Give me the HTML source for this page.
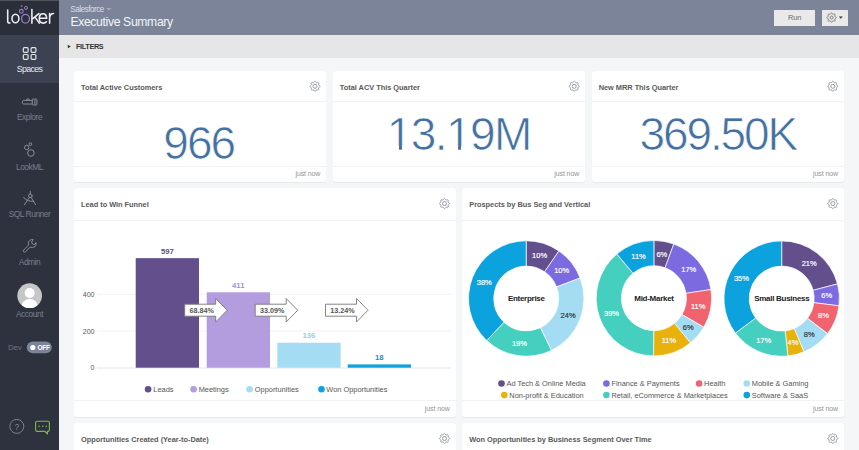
<!DOCTYPE html>
<html><head><meta charset="utf-8">
<style>
*{margin:0;padding:0;box-sizing:border-box}
html,body{width:859px;height:450px;overflow:hidden;background:#f5f6f8;font-family:"Liberation Sans",sans-serif}
.abs{position:absolute;white-space:nowrap}
#side{position:absolute;left:0;top:0;width:59px;height:450px;background:#2d323e}
#logo{position:absolute;left:0;top:0;width:59px;height:35px;background:#2a2f3a}
#sel{position:absolute;left:0;top:35px;width:59px;height:48px;background:#3c4252}
.nav{position:absolute;left:0;width:59px;text-align:center;font-size:8.4px;letter-spacing:-0.45px;color:#7a7f8a;white-space:nowrap}
#hdr{position:absolute;left:59px;top:0;width:800px;height:34.6px;background:#7b8499}
#flt{position:absolute;left:59px;top:34.6px;width:800px;height:23px;background:#e6e6e6}
.btn{position:absolute;top:10px;height:15.7px;background:#e9e9e9;border-radius:0.5px}
.card{position:absolute;background:#fff;border-radius:3px;box-shadow:0 0.5px 1px rgba(0,0,0,0.06)}
.ct{position:absolute;left:7px;top:11.6px;font-size:7.4px;font-weight:bold;color:#5a5a5a;white-space:nowrap;letter-spacing:-0.02px}
.hd{position:absolute;left:0;right:0;height:0.8px;background:#f2f2f2}
.foot{position:absolute;left:0;right:0;height:0.8px;background:#f2f2f2}
.jn{position:absolute;right:6px;font-size:7px;color:#939393;white-space:nowrap;letter-spacing:-0.1px}
.big{position:absolute;font-size:46px;color:#4471a2;white-space:nowrap;line-height:1;-webkit-text-stroke:0.7px #fff}
svg text{font-family:"Liberation Sans",sans-serif}
.dl{font-size:7.5px;text-anchor:middle;stroke-width:0.18px}
.dc{font-size:8px;font-weight:bold;text-anchor:middle;fill:#222;letter-spacing:-0.28px}
.ax{font-size:7px;text-anchor:end;fill:#555}
.bl{font-size:7.7px;font-weight:bold;text-anchor:middle}
.ar{font-size:7.2px;font-weight:bold;text-anchor:middle;fill:#555}
.lg{font-size:7.4px;fill:#555}
</style></head><body>
<div id="side">
  <div id="logo"></div>
  <div id="sel"></div>
  <div class="abs" style="left:0;top:0;width:59px;height:1px;background:#50545d"></div>
  <div class="nav" style="top:64px;color:#e9eaee;font-size:8.8px;letter-spacing:-0.65px">Spaces</div>
  <div class="nav" style="top:112px">Explore</div>
  <div class="nav" style="top:161.6px">LookML</div>
  <div class="nav" style="top:208.7px">SQL Runner</div>
  <div class="nav" style="top:257.3px">Admin</div>
  <div class="nav" style="top:308.5px">Account</div>
  <div class="abs" style="left:8px;top:342.6px;font-size:8px;color:#6d737f;letter-spacing:-0.3px">Dev</div>
</div>
<div id="hdr">
  <div class="abs" style="left:11.2px;top:5.1px;font-size:8.2px;color:#dcdfe6;letter-spacing:-0.5px">Salesforce</div>
  <div class="abs" style="left:11.4px;top:14.5px;font-size:12.2px;color:#f4f5f7;letter-spacing:-0.35px">Executive Summary</div>
  <div class="btn" style="left:715px;width:41px"></div>
  <div class="abs" style="left:729px;top:13.3px;font-size:7.4px;color:#6a6a6a;letter-spacing:-0.1px">Run</div>
  <div class="btn" style="left:762.7px;width:26.3px"></div>
</div>
<div id="flt">
  <div class="abs" style="left:17px;top:7.5px;font-size:7.2px;font-weight:bold;color:#333;letter-spacing:-0.3px">FILTERS</div>
</div>
<div class="card" style="left:74px;top:71px;width:252.33px;height:111.3px"><div class="ct">Total Active Customers</div><div class="hd" style="top:30px"></div><div class="foot" style="top:94.5px"></div><div class="jn" style="top:99.1px">just now</div></div>
<div class="card" style="left:332.83px;top:71px;width:252.34px;height:111.3px"><div class="ct">Total ACV This Quarter</div><div class="hd" style="top:30px"></div><div class="foot" style="top:94.5px"></div><div class="jn" style="top:99.1px">just now</div></div>
<div class="card" style="left:591.67px;top:71px;width:252.33px;height:111.3px"><div class="ct">New MRR This Quarter</div><div class="hd" style="top:30px"></div><div class="foot" style="top:94.5px"></div><div class="jn" style="top:99.1px">just now</div></div>
<div class="card" style="left:74px;top:188px;width:381.75px;height:228.8px"><div class="ct">Lead to Win Funnel</div><div class="hd" style="top:31.6px"></div><div class="foot" style="top:212.0px"></div><div class="jn" style="top:216.60000000000002px">just now</div></div>
<div class="card" style="left:462.25px;top:188px;width:381.75px;height:228.8px"><div class="ct">Prospects by Bus Seg and Vertical</div><div class="hd" style="top:31.6px"></div><div class="foot" style="top:212.0px"></div><div class="jn" style="top:216.60000000000002px">just now</div></div>
<div class="card" style="left:74px;top:423px;width:381.75px;height:60px"><div class="ct">Opportunities Created (Year-to-Date)</div><div class="hd" style="top:31.6px"></div></div>
<div class="card" style="left:462.25px;top:423px;width:381.75px;height:60px"><div class="ct">Won Opportunities by Business Segment Over Time</div><div class="hd" style="top:31.6px"></div></div>
<div class="big" style="left:163.3px;top:120px;letter-spacing:-1.95px">966</div>
<div class="big" style="left:386.7px;top:111px;letter-spacing:-1.54px">13.19M</div>
<div class="abs" style="left:388px;top:146.4px;width:10.6px;height:5px;background:#fff"></div>
<div class="abs" style="left:401.9px;top:146.4px;width:9px;height:5px;background:#fff"></div>
<div class="abs" style="left:447px;top:146.4px;width:10.6px;height:5px;background:#fff"></div>
<div class="abs" style="left:460.9px;top:146.4px;width:9px;height:5px;background:#fff"></div>
<div class="big" style="left:639.5px;top:111px;letter-spacing:-2.12px">369.50K</div>
<svg class="abs" style="left:0;top:0" width="859" height="450" viewBox="0 0 859 450">
<!-- logo -->
<g fill="none" stroke="#eeeef2" stroke-width="1.55" stroke-linecap="round">
<path d="M7.7,10V21.2Q7.7,23 9.9,23"/>
<ellipse cx="15.45" cy="18.5" rx="3.45" ry="4.3"/>
<path d="M31.9,9.6V23.3M32.2,19.2L38.9,13.6M34.8,16.9L39.3,23.1"/>
<path d="M39.5,18.3H46.6Q46.6,13.8 43,13.8Q39.3,13.8 39.3,18.5Q39.3,23.1 43.2,23.1Q45.3,23.1 46.4,21.7"/>
<path d="M49.6,13.6V23.3M49.6,17.6Q50.2,13.7 53.5,13.6"/>
</g>
<g fill="none" stroke="#9a7cc9" stroke-width="1.3">
<ellipse cx="25.5" cy="18.8" rx="3.95" ry="4.35"/>
<circle cx="21.3" cy="11.3" r="1.9" stroke-width="1.1"/>
<circle cx="26" cy="7.9" r="1.5" stroke-width="1"/>
<circle cx="21.6" cy="6" r="1" fill="#7e68a8" stroke="none"/>
</g>
<!-- spaces icon -->
<g fill="none" stroke="#e4e6ea" stroke-width="1.2">
<rect x="23.3" y="47.6" width="4.8" height="4.8" rx="1.1"/><rect x="31.1" y="47.6" width="4.8" height="4.8" rx="1.1"/>
<rect x="23.3" y="54.5" width="4.8" height="4.8" rx="1.1"/><rect x="31.1" y="54.5" width="4.8" height="4.8" rx="1.1"/>
</g>
<!-- explore icon -->
<g fill="none" stroke="#8c919b" stroke-width="0.95">
<path d="M32.3,100.4H23.6Q22.4,100.4 22.4,102.2Q22.4,104 23.6,104H32.3"/>
<path d="M26.1,100.4Q26.4,98.9 27.9,98.9Q29.4,98.9 29.7,100.4"/>
<rect x="32.3" y="99.1" width="4.6" height="5.9" rx="0.6"/>
<path d="M34.9,99.5V104.6"/>
</g>
<!-- lookml icon -->
<g fill="none" stroke="#8c919b" stroke-width="0.95">
<circle cx="30.4" cy="144.1" r="1.4"/>
<circle cx="26.7" cy="147.4" r="2.2"/>
<circle cx="30.9" cy="153" r="3.3"/>
</g>
<!-- sql icon -->
<g fill="none" stroke="#8c919b" stroke-width="0.95" stroke-linecap="round">
<path d="M30.3,191.3V194"/>
<circle cx="30.3" cy="195.8" r="1.8"/>
<path d="M29.4,197.5L24.4,204.7M31.2,197.5L35.6,204.7"/>
<path d="M23.6,197.3Q26.8,201.8 33.3,201.3"/>
</g>
<!-- admin icon -->
<g fill="none" stroke="#8c919b" stroke-width="0.95" stroke-linejoin="round" transform="translate(20,236)">
<path d="M10.2,11.1L5.6,15.7Q4.6,16.7 3.7,15.8Q2.8,14.9 3.8,13.9L8.4,9.3Q7.6,6.2 9.8,4.3Q11.4,3.1 13.2,3.6L11.6,5.9L12.4,8L14.6,8.6L16,6.6Q16.6,8.9 15,10.6Q12.9,12.3 10.2,11.1Z"/>
</g>
<!-- avatar -->
<clipPath id="av"><circle cx="29.65" cy="295.65" r="12.35"/></clipPath>
<circle cx="29.65" cy="295.65" r="12.35" fill="#c6c6c6"/>
<g clip-path="url(#av)" fill="#fff">
<circle cx="29.7" cy="293" r="5"/>
<ellipse cx="29.7" cy="308.5" rx="8.6" ry="9.8"/>
</g>
<!-- toggle -->
<rect x="26.8" y="341.5" width="25" height="11.8" rx="5.9" fill="#7b8499"/>
<circle cx="32.8" cy="347.5" r="2.6" fill="#fff"/>
<text x="37.5" y="350.1" font-size="6.5" font-weight="bold" fill="#fff" letter-spacing="-0.25">OFF</text>
<!-- help -->
<circle cx="16.8" cy="426.4" r="7" fill="none" stroke="#80858f" stroke-width="0.95"/>
<text x="16.8" y="429.5" font-size="8.5" fill="#80858f" text-anchor="middle">?</text>
<!-- chat -->
<path d="M37.2,421.2H47.8Q49.4,421.2 49.4,422.8V429.8Q49.4,431.4 47.8,431.4H47.4V434L45,431.4H37.2Q35.6,431.4 35.6,429.8V422.8Q35.6,421.2 37.2,421.2Z" fill="none" stroke="#7ab648" stroke-width="1.15" stroke-linejoin="round"/>
<g fill="#7ab648"><circle cx="39.1" cy="426.3" r="0.8"/><circle cx="42.8" cy="426.3" r="0.8"/><circle cx="46.3" cy="426.3" r="0.8"/></g>
<!-- salesforce chevron -->
<path d="M107.4,8.1L108.9,9.6L110.4,8.1" fill="none" stroke="#dcdfe6" stroke-width="1"/>
<path d="M315.00,81.27L315.32,81.36L315.62,81.60L315.87,81.94L316.08,82.28L316.27,82.56L316.48,82.72L316.75,82.76L317.08,82.70L317.47,82.60L317.89,82.54L318.27,82.58L318.56,82.74L318.72,83.03L318.76,83.41L318.70,83.83L318.60,84.22L318.54,84.55L318.58,84.82L318.74,85.03L319.02,85.22L319.36,85.43L319.70,85.68L319.94,85.98L320.03,86.30L319.94,86.62L319.70,86.92L319.36,87.17L319.02,87.38L318.74,87.57L318.58,87.78L318.54,88.05L318.60,88.38L318.70,88.77L318.76,89.19L318.72,89.57L318.56,89.86L318.27,90.02L317.89,90.06L317.47,90.00L317.08,89.90L316.75,89.84L316.48,89.88L316.27,90.04L316.08,90.32L315.87,90.66L315.62,91.00L315.32,91.24L315.00,91.33L314.68,91.24L314.38,91.00L314.13,90.66L313.92,90.32L313.73,90.04L313.52,89.88L313.25,89.84L312.92,89.90L312.53,90.00L312.11,90.06L311.73,90.02L311.44,89.86L311.28,89.57L311.24,89.19L311.30,88.77L311.40,88.38L311.46,88.05L311.42,87.78L311.26,87.57L310.98,87.38L310.64,87.17L310.30,86.92L310.06,86.62L309.97,86.30L310.06,85.98L310.30,85.68L310.64,85.43L310.98,85.22L311.26,85.03L311.42,84.82L311.46,84.55L311.40,84.22L311.30,83.83L311.24,83.41L311.28,83.03L311.44,82.74L311.73,82.58L312.11,82.54L312.53,82.60L312.92,82.70L313.25,82.76L313.52,82.72L313.73,82.56L313.92,82.28L314.13,81.94L314.38,81.60L314.68,81.36Z" fill="none" stroke="#949aa3" stroke-width="1.0" stroke-linejoin="round"/><circle cx="315" cy="86.3" r="2.0" fill="none" stroke="#949aa3" stroke-width="1.0"/>
<path d="M574.20,81.27L574.52,81.36L574.82,81.60L575.07,81.94L575.28,82.28L575.47,82.56L575.68,82.72L575.95,82.76L576.28,82.70L576.67,82.60L577.09,82.54L577.47,82.58L577.76,82.74L577.92,83.03L577.96,83.41L577.90,83.83L577.80,84.22L577.74,84.55L577.78,84.82L577.94,85.03L578.22,85.22L578.56,85.43L578.90,85.68L579.14,85.98L579.23,86.30L579.14,86.62L578.90,86.92L578.56,87.17L578.22,87.38L577.94,87.57L577.78,87.78L577.74,88.05L577.80,88.38L577.90,88.77L577.96,89.19L577.92,89.57L577.76,89.86L577.47,90.02L577.09,90.06L576.67,90.00L576.28,89.90L575.95,89.84L575.68,89.88L575.47,90.04L575.28,90.32L575.07,90.66L574.82,91.00L574.52,91.24L574.20,91.33L573.88,91.24L573.58,91.00L573.33,90.66L573.12,90.32L572.93,90.04L572.72,89.88L572.45,89.84L572.12,89.90L571.73,90.00L571.31,90.06L570.93,90.02L570.64,89.86L570.48,89.57L570.44,89.19L570.50,88.77L570.60,88.38L570.66,88.05L570.62,87.78L570.46,87.57L570.18,87.38L569.84,87.17L569.50,86.92L569.26,86.62L569.17,86.30L569.26,85.98L569.50,85.68L569.84,85.43L570.18,85.22L570.46,85.03L570.62,84.82L570.66,84.55L570.60,84.22L570.50,83.83L570.44,83.41L570.48,83.03L570.64,82.74L570.93,82.58L571.31,82.54L571.73,82.60L572.12,82.70L572.45,82.76L572.72,82.72L572.93,82.56L573.12,82.28L573.33,81.94L573.58,81.60L573.88,81.36Z" fill="none" stroke="#949aa3" stroke-width="1.0" stroke-linejoin="round"/><circle cx="574.2" cy="86.3" r="2.0" fill="none" stroke="#949aa3" stroke-width="1.0"/>
<path d="M832.80,81.27L833.12,81.36L833.42,81.60L833.67,81.94L833.88,82.28L834.07,82.56L834.28,82.72L834.55,82.76L834.88,82.70L835.27,82.60L835.69,82.54L836.07,82.58L836.36,82.74L836.52,83.03L836.56,83.41L836.50,83.83L836.40,84.22L836.34,84.55L836.38,84.82L836.54,85.03L836.82,85.22L837.16,85.43L837.50,85.68L837.74,85.98L837.83,86.30L837.74,86.62L837.50,86.92L837.16,87.17L836.82,87.38L836.54,87.57L836.38,87.78L836.34,88.05L836.40,88.38L836.50,88.77L836.56,89.19L836.52,89.57L836.36,89.86L836.07,90.02L835.69,90.06L835.27,90.00L834.88,89.90L834.55,89.84L834.28,89.88L834.07,90.04L833.88,90.32L833.67,90.66L833.42,91.00L833.12,91.24L832.80,91.33L832.48,91.24L832.18,91.00L831.93,90.66L831.72,90.32L831.53,90.04L831.32,89.88L831.05,89.84L830.72,89.90L830.33,90.00L829.91,90.06L829.53,90.02L829.24,89.86L829.08,89.57L829.04,89.19L829.10,88.77L829.20,88.38L829.26,88.05L829.22,87.78L829.06,87.57L828.78,87.38L828.44,87.17L828.10,86.92L827.86,86.62L827.77,86.30L827.86,85.98L828.10,85.68L828.44,85.43L828.78,85.22L829.06,85.03L829.22,84.82L829.26,84.55L829.20,84.22L829.10,83.83L829.04,83.41L829.08,83.03L829.24,82.74L829.53,82.58L829.91,82.54L830.33,82.60L830.72,82.70L831.05,82.76L831.32,82.72L831.53,82.56L831.72,82.28L831.93,81.94L832.18,81.60L832.48,81.36Z" fill="none" stroke="#949aa3" stroke-width="1.0" stroke-linejoin="round"/><circle cx="832.8" cy="86.3" r="2.0" fill="none" stroke="#949aa3" stroke-width="1.0"/>
<path d="M444.50,198.57L444.82,198.66L445.12,198.90L445.37,199.24L445.58,199.58L445.77,199.86L445.98,200.02L446.25,200.06L446.58,200.00L446.97,199.90L447.39,199.84L447.77,199.88L448.06,200.04L448.22,200.33L448.26,200.71L448.20,201.13L448.10,201.52L448.04,201.85L448.08,202.12L448.24,202.33L448.52,202.52L448.86,202.73L449.20,202.98L449.44,203.28L449.53,203.60L449.44,203.92L449.20,204.22L448.86,204.47L448.52,204.68L448.24,204.87L448.08,205.08L448.04,205.35L448.10,205.68L448.20,206.07L448.26,206.49L448.22,206.87L448.06,207.16L447.77,207.32L447.39,207.36L446.97,207.30L446.58,207.20L446.25,207.14L445.98,207.18L445.77,207.34L445.58,207.62L445.37,207.96L445.12,208.30L444.82,208.54L444.50,208.63L444.18,208.54L443.88,208.30L443.63,207.96L443.42,207.62L443.23,207.34L443.02,207.18L442.75,207.14L442.42,207.20L442.03,207.30L441.61,207.36L441.23,207.32L440.94,207.16L440.78,206.87L440.74,206.49L440.80,206.07L440.90,205.68L440.96,205.35L440.92,205.08L440.76,204.87L440.48,204.68L440.14,204.47L439.80,204.22L439.56,203.92L439.47,203.60L439.56,203.28L439.80,202.98L440.14,202.73L440.48,202.52L440.76,202.33L440.92,202.12L440.96,201.85L440.90,201.52L440.80,201.13L440.74,200.71L440.78,200.33L440.94,200.04L441.23,199.88L441.61,199.84L442.03,199.90L442.42,200.00L442.75,200.06L443.02,200.02L443.23,199.86L443.42,199.58L443.63,199.24L443.88,198.90L444.18,198.66Z" fill="none" stroke="#949aa3" stroke-width="1.0" stroke-linejoin="round"/><circle cx="444.5" cy="203.6" r="2.0" fill="none" stroke="#949aa3" stroke-width="1.0"/>
<path d="M832.80,198.57L833.12,198.66L833.42,198.90L833.67,199.24L833.88,199.58L834.07,199.86L834.28,200.02L834.55,200.06L834.88,200.00L835.27,199.90L835.69,199.84L836.07,199.88L836.36,200.04L836.52,200.33L836.56,200.71L836.50,201.13L836.40,201.52L836.34,201.85L836.38,202.12L836.54,202.33L836.82,202.52L837.16,202.73L837.50,202.98L837.74,203.28L837.83,203.60L837.74,203.92L837.50,204.22L837.16,204.47L836.82,204.68L836.54,204.87L836.38,205.08L836.34,205.35L836.40,205.68L836.50,206.07L836.56,206.49L836.52,206.87L836.36,207.16L836.07,207.32L835.69,207.36L835.27,207.30L834.88,207.20L834.55,207.14L834.28,207.18L834.07,207.34L833.88,207.62L833.67,207.96L833.42,208.30L833.12,208.54L832.80,208.63L832.48,208.54L832.18,208.30L831.93,207.96L831.72,207.62L831.53,207.34L831.32,207.18L831.05,207.14L830.72,207.20L830.33,207.30L829.91,207.36L829.53,207.32L829.24,207.16L829.08,206.87L829.04,206.49L829.10,206.07L829.20,205.68L829.26,205.35L829.22,205.08L829.06,204.87L828.78,204.68L828.44,204.47L828.10,204.22L827.86,203.92L827.77,203.60L827.86,203.28L828.10,202.98L828.44,202.73L828.78,202.52L829.06,202.33L829.22,202.12L829.26,201.85L829.20,201.52L829.10,201.13L829.04,200.71L829.08,200.33L829.24,200.04L829.53,199.88L829.91,199.84L830.33,199.90L830.72,200.00L831.05,200.06L831.32,200.02L831.53,199.86L831.72,199.58L831.93,199.24L832.18,198.90L832.48,198.66Z" fill="none" stroke="#949aa3" stroke-width="1.0" stroke-linejoin="round"/><circle cx="832.8" cy="203.6" r="2.0" fill="none" stroke="#949aa3" stroke-width="1.0"/>
<path d="M444.50,433.47L444.82,433.56L445.12,433.80L445.37,434.14L445.58,434.48L445.77,434.76L445.98,434.92L446.25,434.96L446.58,434.90L446.97,434.80L447.39,434.74L447.77,434.78L448.06,434.94L448.22,435.23L448.26,435.61L448.20,436.03L448.10,436.42L448.04,436.75L448.08,437.02L448.24,437.23L448.52,437.42L448.86,437.63L449.20,437.88L449.44,438.18L449.53,438.50L449.44,438.82L449.20,439.12L448.86,439.37L448.52,439.58L448.24,439.77L448.08,439.98L448.04,440.25L448.10,440.58L448.20,440.97L448.26,441.39L448.22,441.77L448.06,442.06L447.77,442.22L447.39,442.26L446.97,442.20L446.58,442.10L446.25,442.04L445.98,442.08L445.77,442.24L445.58,442.52L445.37,442.86L445.12,443.20L444.82,443.44L444.50,443.53L444.18,443.44L443.88,443.20L443.63,442.86L443.42,442.52L443.23,442.24L443.02,442.08L442.75,442.04L442.42,442.10L442.03,442.20L441.61,442.26L441.23,442.22L440.94,442.06L440.78,441.77L440.74,441.39L440.80,440.97L440.90,440.58L440.96,440.25L440.92,439.98L440.76,439.77L440.48,439.58L440.14,439.37L439.80,439.12L439.56,438.82L439.47,438.50L439.56,438.18L439.80,437.88L440.14,437.63L440.48,437.42L440.76,437.23L440.92,437.02L440.96,436.75L440.90,436.42L440.80,436.03L440.74,435.61L440.78,435.23L440.94,434.94L441.23,434.78L441.61,434.74L442.03,434.80L442.42,434.90L442.75,434.96L443.02,434.92L443.23,434.76L443.42,434.48L443.63,434.14L443.88,433.80L444.18,433.56Z" fill="none" stroke="#949aa3" stroke-width="1.0" stroke-linejoin="round"/><circle cx="444.5" cy="438.5" r="2.0" fill="none" stroke="#949aa3" stroke-width="1.0"/>
<path d="M832.80,433.47L833.12,433.56L833.42,433.80L833.67,434.14L833.88,434.48L834.07,434.76L834.28,434.92L834.55,434.96L834.88,434.90L835.27,434.80L835.69,434.74L836.07,434.78L836.36,434.94L836.52,435.23L836.56,435.61L836.50,436.03L836.40,436.42L836.34,436.75L836.38,437.02L836.54,437.23L836.82,437.42L837.16,437.63L837.50,437.88L837.74,438.18L837.83,438.50L837.74,438.82L837.50,439.12L837.16,439.37L836.82,439.58L836.54,439.77L836.38,439.98L836.34,440.25L836.40,440.58L836.50,440.97L836.56,441.39L836.52,441.77L836.36,442.06L836.07,442.22L835.69,442.26L835.27,442.20L834.88,442.10L834.55,442.04L834.28,442.08L834.07,442.24L833.88,442.52L833.67,442.86L833.42,443.20L833.12,443.44L832.80,443.53L832.48,443.44L832.18,443.20L831.93,442.86L831.72,442.52L831.53,442.24L831.32,442.08L831.05,442.04L830.72,442.10L830.33,442.20L829.91,442.26L829.53,442.22L829.24,442.06L829.08,441.77L829.04,441.39L829.10,440.97L829.20,440.58L829.26,440.25L829.22,439.98L829.06,439.77L828.78,439.58L828.44,439.37L828.10,439.12L827.86,438.82L827.77,438.50L827.86,438.18L828.10,437.88L828.44,437.63L828.78,437.42L829.06,437.23L829.22,437.02L829.26,436.75L829.20,436.42L829.10,436.03L829.04,435.61L829.08,435.23L829.24,434.94L829.53,434.78L829.91,434.74L830.33,434.80L830.72,434.90L831.05,434.96L831.32,434.92L831.53,434.76L831.72,434.48L831.93,434.14L832.18,433.80L832.48,433.56Z" fill="none" stroke="#949aa3" stroke-width="1.0" stroke-linejoin="round"/><circle cx="832.8" cy="438.5" r="2.0" fill="none" stroke="#949aa3" stroke-width="1.0"/>
<!-- header gear -->
<path d="M831.60,12.90L831.90,12.99L832.17,13.24L832.40,13.58L832.58,13.93L832.75,14.21L832.94,14.37L833.18,14.39L833.50,14.31L833.88,14.19L834.28,14.11L834.65,14.13L834.92,14.28L835.07,14.55L835.09,14.92L835.01,15.32L834.89,15.70L834.81,16.02L834.83,16.26L834.99,16.45L835.27,16.62L835.62,16.80L835.96,17.03L836.21,17.30L836.30,17.60L836.21,17.90L835.96,18.17L835.62,18.40L835.27,18.58L834.99,18.75L834.83,18.94L834.81,19.18L834.89,19.50L835.01,19.88L835.09,20.28L835.07,20.65L834.92,20.92L834.65,21.07L834.28,21.09L833.88,21.01L833.50,20.89L833.18,20.81L832.94,20.83L832.75,20.99L832.58,21.27L832.40,21.62L832.17,21.96L831.90,22.21L831.60,22.30L831.30,22.21L831.03,21.96L830.80,21.62L830.62,21.27L830.45,20.99L830.26,20.83L830.02,20.81L829.70,20.89L829.32,21.01L828.92,21.09L828.55,21.07L828.28,20.92L828.13,20.65L828.11,20.28L828.19,19.88L828.31,19.50L828.39,19.18L828.37,18.94L828.21,18.75L827.93,18.58L827.58,18.40L827.24,18.17L826.99,17.90L826.90,17.60L826.99,17.30L827.24,17.03L827.58,16.80L827.93,16.62L828.21,16.45L828.37,16.26L828.39,16.02L828.31,15.70L828.19,15.32L828.11,14.92L828.13,14.55L828.28,14.28L828.55,14.13L828.92,14.11L829.32,14.19L829.70,14.31L830.02,14.39L830.26,14.37L830.45,14.21L830.62,13.93L830.80,13.58L831.03,13.24L831.30,12.99Z" fill="none" stroke="#747474" stroke-width="0.9" stroke-linejoin="round"/><circle cx="831.6" cy="17.6" r="1.5" fill="none" stroke="#747474" stroke-width="0.9"/>
<path d="M838.8,16.5h4l-2,2.3z" fill="#333"/>
<!-- filter triangle -->
<path d="M67.8,44.7L70.8,46.5L67.8,48.3Z" fill="#333"/>
<line x1="97" y1="294.3" x2="451" y2="294.3" stroke="#eeeeee" stroke-width="0.8"/>
<line x1="97" y1="331" x2="451" y2="331" stroke="#eeeeee" stroke-width="0.8"/>
<line x1="97" y1="368.0" x2="451" y2="368.0" stroke="#dddddd" stroke-width="0.8"/>
<text x="94.5" y="296.8" class="ax">400</text>
<text x="94.5" y="333.5" class="ax">200</text>
<text x="94.5" y="370.2" class="ax">0</text>
<rect x="135.7" y="258.15" width="63.3" height="109.55" fill="#624f8b"/>
<text x="167.3" y="253.7" class="bl" fill="#5b4a85">597</text>
<rect x="206.7" y="292.28" width="63.3" height="75.42" fill="#b39ddf"/>
<text x="238.3" y="287.8" class="bl" fill="#a58fd6">411</text>
<rect x="277.3" y="342.74" width="63.3" height="24.96" fill="#a4dcf4"/>
<text x="308.9" y="338.2" class="bl" fill="#8fd2f0">136</text>
<rect x="347.7" y="364.40" width="63.3" height="3.30" fill="#0ca2de"/>
<text x="379.3" y="359.9" class="bl" fill="#1490d0">18</text>
<path d="M184.7,304.2H215.7V298.5L227.2,310.25L215.7,322V316.2H184.7Z" fill="#fff" stroke="#777" stroke-width="0.9"/>
<text x="201.7" y="312.7" class="ar">68.84%</text>
<path d="M255.2,304.2H286.2V298.5L297.7,310.25L286.2,322V316.2H255.2Z" fill="#fff" stroke="#777" stroke-width="0.9"/>
<text x="272.2" y="312.7" class="ar">33.09%</text>
<path d="M325.5,304.2H356.5V298.5L368.0,310.25L356.5,322V316.2H325.5Z" fill="#fff" stroke="#777" stroke-width="0.9"/>
<text x="342.5" y="312.7" class="ar">13.24%</text>
<circle cx="148.1" cy="389.2" r="3.3" fill="#624f8b"/><text x="153.3" y="391.8" class="lg">Leads</text><circle cx="193.6" cy="389.2" r="3.3" fill="#b39ddf"/><text x="198.7" y="391.8" class="lg">Meetings</text><circle cx="249.6" cy="389.2" r="3.3" fill="#a4dcf4"/><text x="254.8" y="391.8" class="lg">Opportunities</text><circle cx="321.5" cy="389.2" r="3.3" fill="#0ca2de"/><text x="326.3" y="391.8" class="lg">Won Opportunities</text>
<path d="M526.20,240.80A57.7,57.7 0 0 1 558.93,250.98L544.64,271.74A32.5,32.5 0 0 0 526.20,266.00Z" fill="#624f8b" stroke="#fff" stroke-width="0.7"/>
<text x="539.6" y="258.1" fill="#fff" stroke="#fff" class="dl">10%</text>
<path d="M558.93,250.98A57.7,57.7 0 0 1 580.11,277.94L556.57,286.92A32.5,32.5 0 0 0 544.64,271.74Z" fill="#7b6ae0" stroke="#fff" stroke-width="0.7"/>
<text x="561.7" y="273.3" fill="#fff" stroke="#fff" class="dl">10%</text>
<path d="M580.11,277.94A57.7,57.7 0 0 1 551.42,350.40L540.41,327.73A32.5,32.5 0 0 0 556.57,286.92Z" fill="#a4dcf4" stroke="#fff" stroke-width="0.7"/>
<text x="568.1" y="317.8" fill="#333" stroke="#333" class="dl">24%</text>
<path d="M551.42,350.40A57.7,57.7 0 0 1 486.70,340.56L503.95,322.19A32.5,32.5 0 0 0 540.41,327.73Z" fill="#45cfbe" stroke="#fff" stroke-width="0.7"/>
<text x="519.4" y="345.8" fill="#fff" stroke="#fff" class="dl">19%</text>
<path d="M486.70,340.56A57.7,57.7 0 0 1 526.20,240.80L526.20,266.00A32.5,32.5 0 0 0 503.95,322.19Z" fill="#0ca2de" stroke="#fff" stroke-width="0.7"/>
<text x="484.3" y="284.6" fill="#fff" stroke="#fff" class="dl">38%</text>
<text x="526.3" y="300.9" class="dc">Enterprise</text>
<path d="M653.90,240.50A57.7,57.7 0 0 1 673.79,244.04L665.10,267.69A32.5,32.5 0 0 0 653.90,265.70Z" fill="#624f8b" stroke="#fff" stroke-width="0.7"/>
<text x="661.8" y="256.5" fill="#fff" stroke="#fff" class="dl">6%</text>
<path d="M673.79,244.04A57.7,57.7 0 0 1 710.95,289.53L686.03,293.32A32.5,32.5 0 0 0 665.10,267.69Z" fill="#7b6ae0" stroke="#fff" stroke-width="0.7"/>
<text x="688.8" y="272.4" fill="#fff" stroke="#fff" class="dl">17%</text>
<path d="M710.95,289.53A57.7,57.7 0 0 1 703.75,327.26L681.98,314.57A32.5,32.5 0 0 0 686.03,293.32Z" fill="#f0636f" stroke="#fff" stroke-width="0.7"/>
<text x="698.2" y="309.4" fill="#fff" stroke="#fff" class="dl">11%</text>
<path d="M703.75,327.26A57.7,57.7 0 0 1 690.40,342.89L674.46,323.37A32.5,32.5 0 0 0 681.98,314.57Z" fill="#a4dcf4" stroke="#fff" stroke-width="0.7"/>
<text x="688.2" y="330.2" fill="#333" stroke="#333" class="dl">6%</text>
<path d="M690.40,342.89A57.7,57.7 0 0 1 653.54,355.90L653.70,330.70A32.5,32.5 0 0 0 674.46,323.37Z" fill="#e9b10c" stroke="#fff" stroke-width="0.7"/>
<text x="668.9" y="343.4" fill="#fff" stroke="#fff" class="dl">11%</text>
<path d="M653.54,355.90A57.7,57.7 0 0 1 616.84,253.97L633.03,273.29A32.5,32.5 0 0 0 653.70,330.70Z" fill="#45cfbe" stroke="#fff" stroke-width="0.7"/>
<text x="611.5" y="316.2" fill="#fff" stroke="#fff" class="dl">39%</text>
<path d="M616.84,253.97A57.7,57.7 0 0 1 653.90,240.50L653.90,265.70A32.5,32.5 0 0 0 633.03,273.29Z" fill="#0ca2de" stroke="#fff" stroke-width="0.7"/>
<text x="638.5" y="258.5" fill="#fff" stroke="#fff" class="dl">11%</text>
<text x="654.0" y="300.6" class="dc">Mid-Market</text>
<path d="M781.70,240.90A57.7,57.7 0 0 1 837.50,283.90L813.13,290.32A32.5,32.5 0 0 0 781.70,266.10Z" fill="#624f8b" stroke="#fff" stroke-width="0.7"/>
<text x="809.2" y="265.6" fill="#fff" stroke="#fff" class="dl">21%</text>
<path d="M837.50,283.90A57.7,57.7 0 0 1 838.95,305.83L813.94,302.67A32.5,32.5 0 0 0 813.13,290.32Z" fill="#7b6ae0" stroke="#fff" stroke-width="0.7"/>
<text x="826.7" y="298.3" fill="#fff" stroke="#fff" class="dl">6%</text>
<path d="M838.95,305.83A57.7,57.7 0 0 1 827.51,333.68L807.50,318.36A32.5,32.5 0 0 0 813.94,302.67Z" fill="#f0636f" stroke="#fff" stroke-width="0.7"/>
<text x="823.4" y="318.4" fill="#fff" stroke="#fff" class="dl">8%</text>
<path d="M827.51,333.68A57.7,57.7 0 0 1 803.95,351.84L794.23,328.59A32.5,32.5 0 0 0 807.50,318.36Z" fill="#a4dcf4" stroke="#fff" stroke-width="0.7"/>
<text x="809.2" y="337.0" fill="#333" stroke="#333" class="dl">8%</text>
<path d="M803.95,351.84A57.7,57.7 0 0 1 787.85,355.97L785.16,330.91A32.5,32.5 0 0 0 794.23,328.59Z" fill="#e9b10c" stroke="#fff" stroke-width="0.7"/>
<text x="792.9" y="345.0" fill="#fff" stroke="#fff" class="dl">4%</text>
<path d="M787.85,355.97A57.7,57.7 0 0 1 735.45,333.10L755.65,318.03A32.5,32.5 0 0 0 785.16,330.91Z" fill="#45cfbe" stroke="#fff" stroke-width="0.7"/>
<text x="763.7" y="342.6" fill="#fff" stroke="#fff" class="dl">17%</text>
<path d="M735.45,333.10A57.7,57.7 0 0 1 781.70,240.90L781.70,266.10A32.5,32.5 0 0 0 755.65,318.03Z" fill="#0ca2de" stroke="#fff" stroke-width="0.7"/>
<text x="741.4" y="281.1" fill="#fff" stroke="#fff" class="dl">35%</text>
<text x="781.8" y="301.0" class="dc">Small Business</text>
<circle cx="501.5" cy="383.5" r="3.3" fill="#624f8b"/><text x="506.5" y="386.1" class="lg">Ad Tech &amp; Online Media</text><circle cx="606.4" cy="383.5" r="3.3" fill="#7b6ae0"/><text x="611.4" y="386.1" class="lg">Finance &amp; Payments</text><circle cx="699.1" cy="383.5" r="3.3" fill="#f0636f"/><text x="704.1" y="386.1" class="lg">Health</text><circle cx="746.8" cy="383.5" r="3.3" fill="#a4dcf4"/><text x="751.8" y="386.1" class="lg">Mobile &amp; Gaming</text><circle cx="504.3" cy="395.1" r="3.3" fill="#e9b10c"/><text x="509.3" y="397.70000000000005" class="lg">Non-profit &amp; Education</text><circle cx="606.4" cy="395.1" r="3.3" fill="#45cfbe"/><text x="611.4" y="397.70000000000005" class="lg">Retail, eCommerce &amp; Marketplaces</text><circle cx="746.8" cy="395.1" r="3.3" fill="#0ca2de"/><text x="751.8" y="397.70000000000005" class="lg">Software &amp; SaaS</text>
</svg>
</body></html>
